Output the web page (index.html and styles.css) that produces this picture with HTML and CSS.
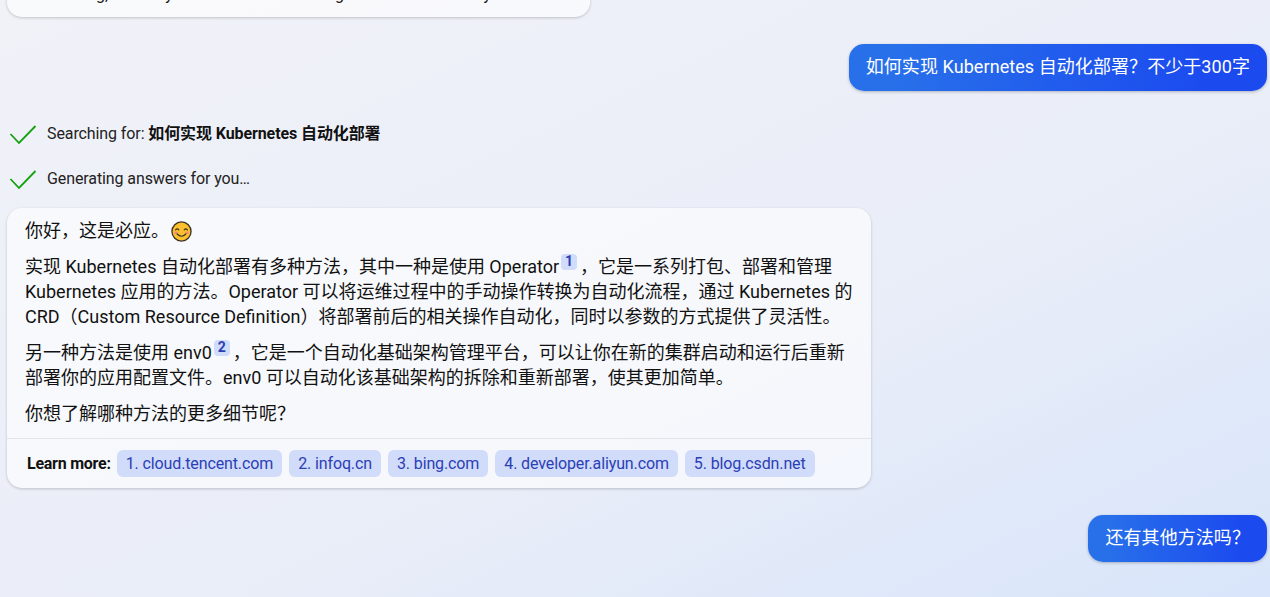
FILE: index.html
```html
<!DOCTYPE html>
<html lang="zh-CN">
<head>
<meta charset="utf-8">
<title>Chat</title>
<link rel="stylesheet" href="styles.css">
</head>
<body>
<main class="chat">
  <section class="card card-previous">
    <p class="para">Mentioning, and they are not all into the thing that are often on my list and</p>
  </section>

  <div class="user-row user-row-first">
    <div class="bubble">如何实现 Kubernetes 自动化部署&#65311;不少于300字</div>
  </div>

  <div class="status status-first">
    <svg class="check" viewBox="0 0 28 24" width="28" height="24"><path d="M1.5 13 10 22 26.5 5"/></svg>
    <span>Searching for: <b>如何实现 Kubernetes 自动化部署</b></span>
  </div>
  <div class="status status-second">
    <svg class="check" viewBox="0 0 28 24" width="28" height="24"><path d="M1.5 13 10 22 26.5 5"/></svg>
    <span>Generating answers for you…</span>
  </div>

  <section class="card card-answer">
    <div class="content">
      <p class="para">你好&#65292;这是必应。<svg class="emoji" viewBox="0 0 22 22" width="21" height="21"><circle cx="11" cy="11" r="10" fill="#fbc02d" stroke="#3a3226" stroke-width="1.4"/><ellipse cx="5.2" cy="12.4" rx="2" ry="1.3" fill="#f48a7a"/><ellipse cx="16.8" cy="12.4" rx="2" ry="1.3" fill="#f48a7a"/><path d="M4.8 9.2q1.7-2 3.4 0M13.8 9.2q1.7-2 3.4 0M6.4 13.6q4.6 4.8 9.2 0" fill="none" stroke="#3a3226" stroke-width="1.2" stroke-linecap="round"/></svg></p>
      <p class="para">实现 Kubernetes 自动化部署有多种方法&#65292;其中一种是使用 Operator<a class="ref">1</a>&#65292;它是一系列打包、部署和管理<br>Kubernetes 应用的方法。Operator 可以将运维过程中的手动操作转换为自动化流程&#65292;通过 Kubernetes 的<br>CRD&#65288;Custom Resource Definition&#65289;将部署前后的相关操作自动化&#65292;同时以参数的方式提供了灵活性。</p>
      <p class="para">另一种方法是使用 env0<a class="ref">2</a>&#65292;它是一个自动化基础架构管理平台&#65292;可以让你在新的集群启动和运行后重新<br>部署你的应用配置文件。env0 可以自动化该基础架构的拆除和重新部署&#65292;使其更加简单。</p>
      <p class="para">你想了解哪种方法的更多细节呢&#65311;</p>
    </div>
    <footer class="learn">
      <span class="learn-label">Learn more:</span>
      <a class="pill">1. cloud.tencent.com</a>
      <a class="pill">2. infoq.cn</a>
      <a class="pill">3. bing.com</a>
      <a class="pill">4. developer.aliyun.com</a>
      <a class="pill">5. blog.csdn.net</a>
    </footer>
  </section>

  <div class="user-row user-row-second">
    <div class="bubble">还有其他方法吗&#65311;</div>
  </div>
</main>
</body>
</html>
```

FILE: styles.css
```css
* { box-sizing: border-box; }
html, body { margin: 0; height: 100%; }
body {
  height: 597px;
  overflow: hidden;
  background: linear-gradient(to bottom right, #f1f2f8 0%, #e9edf8 60%, #d8e5fa 100%);
  font-family: Roboto, "Noto Sans CJK SC", sans-serif;
  font-size: 18px;
  line-height: 25px;
  color: #111;
}
.chat { display: flex; flex-direction: column; padding: 0 3px 0 7px; }
.card {
  background: rgba(255, 255, 255, .6);
  border-radius: 15px;
  box-shadow: 0 1px 3px rgba(0, 0, 0, .2);
}
.card-previous {
  width: 583px;
  height: 35px;
  margin-top: -18px;
  padding: 0 18px;
  overflow: hidden;
  white-space: nowrap;
  font-size: 16px;
}
.card-previous .para { margin: 0; line-height: 25px; }
.card-answer { width: 864px; margin-top: 18px; }
.content { padding: 10px 18px 12px; }
.para { margin: 0 0 11px; }
.para:last-child { margin-bottom: 0; }
.user-row { display: flex; justify-content: flex-end; }
.user-row-first { margin-top: 27px; }
.user-row-second { margin-top: 27px; }
.bubble {
  padding: 10px 17px 12px;
  color: #fff;
  letter-spacing: .07px;
  border-radius: 15px;
  background: linear-gradient(90deg, #2870ea 10.79%, #1b4aef 87.08%);
  box-shadow: 0 1px 3px rgba(0, 0, 0, .25);
}
.status {
  display: flex;
  align-items: center;
  gap: 10px;
  height: 24px;
  padding-left: 2px;
  font-size: 16px;
  letter-spacing: -.1px;
  color: #222;
}
.status b { color: #111; }
.status-first { margin-top: 30px; }
.status-second { margin-top: 21px; }
.check { flex: none; fill: none; stroke: #13a10e; stroke-width: 1.8; }
.emoji { vertical-align: -5px; margin-left: 2px; }
.ref {
  display: inline-block;
  width: 16px;
  height: 16px;
  margin: 0 3px 0 2px;
  border-radius: 4px;
  background: #d1dbfa;
  color: #2b3fb5;
  font-size: 14px;
  font-weight: 700;
  line-height: 14px;
  text-align: center;
  vertical-align: top;
}
.learn {
  display: flex;
  align-items: center;
  gap: 7px;
  padding: 11px 20px;
  border-top: 1px solid #e3e4ea;
}
.learn-label { font-size: 16px; font-weight: 700; letter-spacing: -.25px; margin-right: -1px; }
.pill {
  display: block;
  height: 27px;
  padding: 0 9px;
  border-radius: 6px;
  background: #d1dbfa;
  color: #2b3fb5;
  font-size: 16px;
  letter-spacing: -.12px;
  line-height: 27px;
}
```
